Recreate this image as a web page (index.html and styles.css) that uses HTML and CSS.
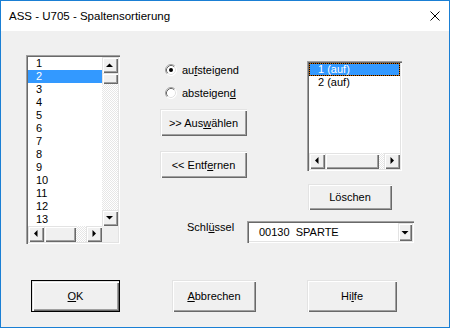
FILE: index.html
```html
<!DOCTYPE html>
<html lang="de">
<head>
<meta charset="utf-8">
<title>ASS - U705 - Spaltensortierung</title>
<link rel="stylesheet" href="styles.css">
</head>
<body>
<div class="window">
  <div class="titlebar">
    <span class="title">ASS - U705 - Spaltensortierung</span>
    <span class="close"><svg width="10" height="10" viewBox="0 0 10 10"><path d="M0.5 0.5L9.5 9.5M9.5 0.5L0.5 9.5" stroke="#000" stroke-width="1" fill="none"/></svg></span>
  </div>
  <div class="client">
    <div class="main">
      <!-- verfuegbare Spalten -->
      <div class="listbox list-left">
        <ul class="items">
          <li>1</li>
          <li class="sel">2</li>
          <li>3</li>
          <li>4</li>
          <li>5</li>
          <li>6</li>
          <li>7</li>
          <li>8</li>
          <li>9</li>
          <li>10</li>
          <li>11</li>
          <li>12</li>
          <li>13</li>
        </ul>
        <div class="vscroll">
          <div class="sbtn"><svg width="16" height="16" viewBox="0 0 16 16"><polygon points="4,10 11,10 7.5,6.5" fill="#000"/></svg></div>
          <div class="thumb"></div>
          <div class="track"></div>
          <div class="sbtn"><svg width="16" height="16" viewBox="0 0 16 16"><polygon points="4,6 11,6 7.5,9.5" fill="#000"/></svg></div>
        </div>
        <div class="hscroll">
          <div class="sbtn"><svg width="16" height="16" viewBox="0 0 16 16"><polygon points="6,7.5 9.5,4 9.5,11" fill="#000"/></svg></div>
          <div class="thumb"></div>
          <div class="track"></div>
          <div class="sbtn"><svg width="16" height="16" viewBox="0 0 16 16"><polygon points="6.5,4 6.5,11 10,7.5" fill="#000"/></svg></div>
        </div>
        <div class="corner"></div>
      </div>

      <div class="side">
        <div class="upper">
          <div class="mid">
            <label class="radio">
              <svg width="12" height="12" viewBox="0 0 12 12">
                <circle cx="6" cy="6" r="5.5" fill="#fff"/>
                <path d="M2.11 9.89A5.5 5.5 0 0 1 9.89 2.11" stroke="#a0a0a0" fill="none"/>
                <path d="M9.89 2.11A5.5 5.5 0 0 1 2.11 9.89" stroke="#fff" fill="none"/>
                <path d="M2.82 9.18A4.5 4.5 0 0 1 9.18 2.82" stroke="#696969" fill="none"/>
                <path d="M9.18 2.82A4.5 4.5 0 0 1 2.82 9.18" stroke="#e3e3e3" fill="none"/>
                <circle cx="6" cy="6" r="2" fill="#000"/>
              </svg>
              <span>au<u>f</u>steigend</span>
            </label>
            <label class="radio">
              <svg width="12" height="12" viewBox="0 0 12 12">
                <circle cx="6" cy="6" r="5.5" fill="#fff"/>
                <path d="M2.11 9.89A5.5 5.5 0 0 1 9.89 2.11" stroke="#a0a0a0" fill="none"/>
                <path d="M9.89 2.11A5.5 5.5 0 0 1 2.11 9.89" stroke="#fff" fill="none"/>
                <path d="M2.82 9.18A4.5 4.5 0 0 1 9.18 2.82" stroke="#696969" fill="none"/>
                <path d="M9.18 2.82A4.5 4.5 0 0 1 2.82 9.18" stroke="#e3e3e3" fill="none"/>
              </svg>
              <span>absteigen<u>d</u></span>
            </label>
            <button class="btn btn-move btn-add">&gt;&gt; Aus<u>w</u>ählen</button>
            <button class="btn btn-move btn-remove">&lt;&lt; Entf<u>e</u>rnen</button>
          </div>

          <div class="right">
            <!-- Sortierreihenfolge -->
            <div class="listbox list-right">
              <ul class="items">
                <li class="sel focus">1 (auf)</li>
                <li>2 (auf)</li>
              </ul>
              <div class="hscroll">
                <div class="sbtn"><svg width="16" height="16" viewBox="0 0 16 16"><polygon points="6,7.5 9.5,4 9.5,11" fill="#000"/></svg></div>
                <div class="thumb"></div>
                <div class="track"></div>
                <div class="sbtn"><svg width="16" height="16" viewBox="0 0 16 16"><polygon points="6.5,4 6.5,11 10,7.5" fill="#000"/></svg></div>
              </div>
            </div>
            <button class="btn btn-del">Löschen</button>
          </div>
        </div>

        <div class="key-row">
          <span class="key-label">Schl<u>ü</u>ssel</span>
          <div class="combo">
            <span class="combo-text">00130  SPARTE</span>
            <div class="sbtn combo-btn"><svg width="14" height="18" viewBox="0 0 14 18"><polygon points="3.5,8 10.5,8 7,11.5" fill="#000"/></svg></div>
          </div>
        </div>
      </div>
    </div>

    <div class="actions">
      <button class="btn btn-ok"><u>O</u>K</button>
      <button class="btn btn-cancel"><u>A</u>bbrechen</button>
      <button class="btn btn-help">Hi<u>l</u>fe</button>
    </div>
  </div>
</div>
</body>
</html>
```

FILE: styles.css
```css
* { box-sizing: border-box; }
body { margin: 0; background: #fff; font-family: "Liberation Sans", Arial, sans-serif; font-size: 11px; color: #000; }
u { text-underline-offset: 1px; }

.window { width: 450px; height: 328px; border: 1px solid #1a7fd4; background: #f0f0f0; display: flex; flex-direction: column; }
.titlebar { height: 30px; background: #fff; display: flex; align-items: center; justify-content: space-between; padding: 0 9px 0 8px; }
.title { font-size: 11.5px; }
.close { display: flex; }

.client { flex: 1; display: flex; flex-direction: column; }
.main { display: flex; align-items: flex-start; padding: 24px 0 0 25px; }

/* 3d edges */
.listbox, .combo { background: #fff; padding: 2px; box-shadow: inset 1px 1px #a0a0a0, inset 2px 2px #696969, inset -1px -1px #fff, inset -2px -2px #e3e3e3; }
.btn, .sbtn, .thumb { background: #f0f0f0; box-shadow: inset 1px 1px #e3e3e3, inset 2px 2px #fff, inset -1px -1px #696969, inset -2px -2px #a0a0a0; }

.listbox { display: grid; flex: none; }
.list-left { width: 94px; height: 189px; grid-template-columns: 1fr 16px; grid-template-rows: 1fr 16px; }
.list-right { width: 95px; height: 110px; grid-template-columns: 1fr; grid-template-rows: 1fr 16px; }

.items { list-style: none; margin: 0; padding: 0; overflow: hidden; }
.items li { height: 13px; line-height: 13px; padding-left: 8px; white-space: nowrap; position: relative; }
.list-right .items li { padding-left: 9px; }
.items li.sel { background: #3399ff; color: #fff; }
.items li.focus { box-shadow: inset 0 0 0 1px #cc6600; }
.items li.focus::after { content: ""; position: absolute; inset: 0; border: 1px dotted #000; }

.sbtn { display: flex; align-items: center; justify-content: center; }
.sbtn svg { display: block; }
.track { background: repeating-conic-gradient(#fff 0 25%, #e6e6e6 0 50%) 0 0 / 2px 2px; }
.vscroll { display: grid; grid-template-rows: 16px 11px 1fr 16px; }
.hscroll { display: grid; grid-template-columns: 16px 32px 1fr 16px; }
.list-right .hscroll { grid-template-columns: 16px 54px 1fr 16px; }
.corner { background: #f0f0f0; }

.side { display: flex; flex-direction: column; margin-left: 40px; }
.upper { display: flex; align-items: flex-start; }
.mid { display: flex; flex-direction: column; width: 87px; flex: none; padding-top: 7px; }
.radio { display: flex; align-items: center; gap: 5px; height: 16px; padding-left: 5px; }
.radio + .radio { margin-top: 7px; }
.radio svg { display: block; flex: none; }

.btn { border: 0; padding: 0; font: inherit; color: #000; display: flex; align-items: center; justify-content: center; white-space: nowrap; flex: none; }
.btn-move { width: 87px; height: 27px; }
.btn-add { margin-top: 8px; }
.btn-remove { margin-top: 15px; }

.right { display: flex; flex-direction: column; margin: 6px 0 0 60px; }
.btn-del { width: 84px; height: 26px; margin: 13px 0 0 1px; }

.key-row { display: flex; align-items: flex-start; margin-top: 11px; }
.key-label { flex: none; width: 87px; padding-left: 27px; line-height: 13px; }
.combo { flex: none; width: 167px; height: 22px; display: flex; align-items: stretch; }
.combo-text { flex: 1; padding-left: 10px; white-space: pre; display: flex; align-items: center; }
.combo-btn { width: 14px; }

.actions { display: flex; margin-top: auto; padding: 0 0 15px 30px; }
.actions .btn { height: 32px; }
.btn-ok { width: 89px; border: 1px solid #000; }
.btn-cancel { width: 84px; margin-left: 52px; }
.btn-help { width: 90px; margin-left: 51px; }
```
